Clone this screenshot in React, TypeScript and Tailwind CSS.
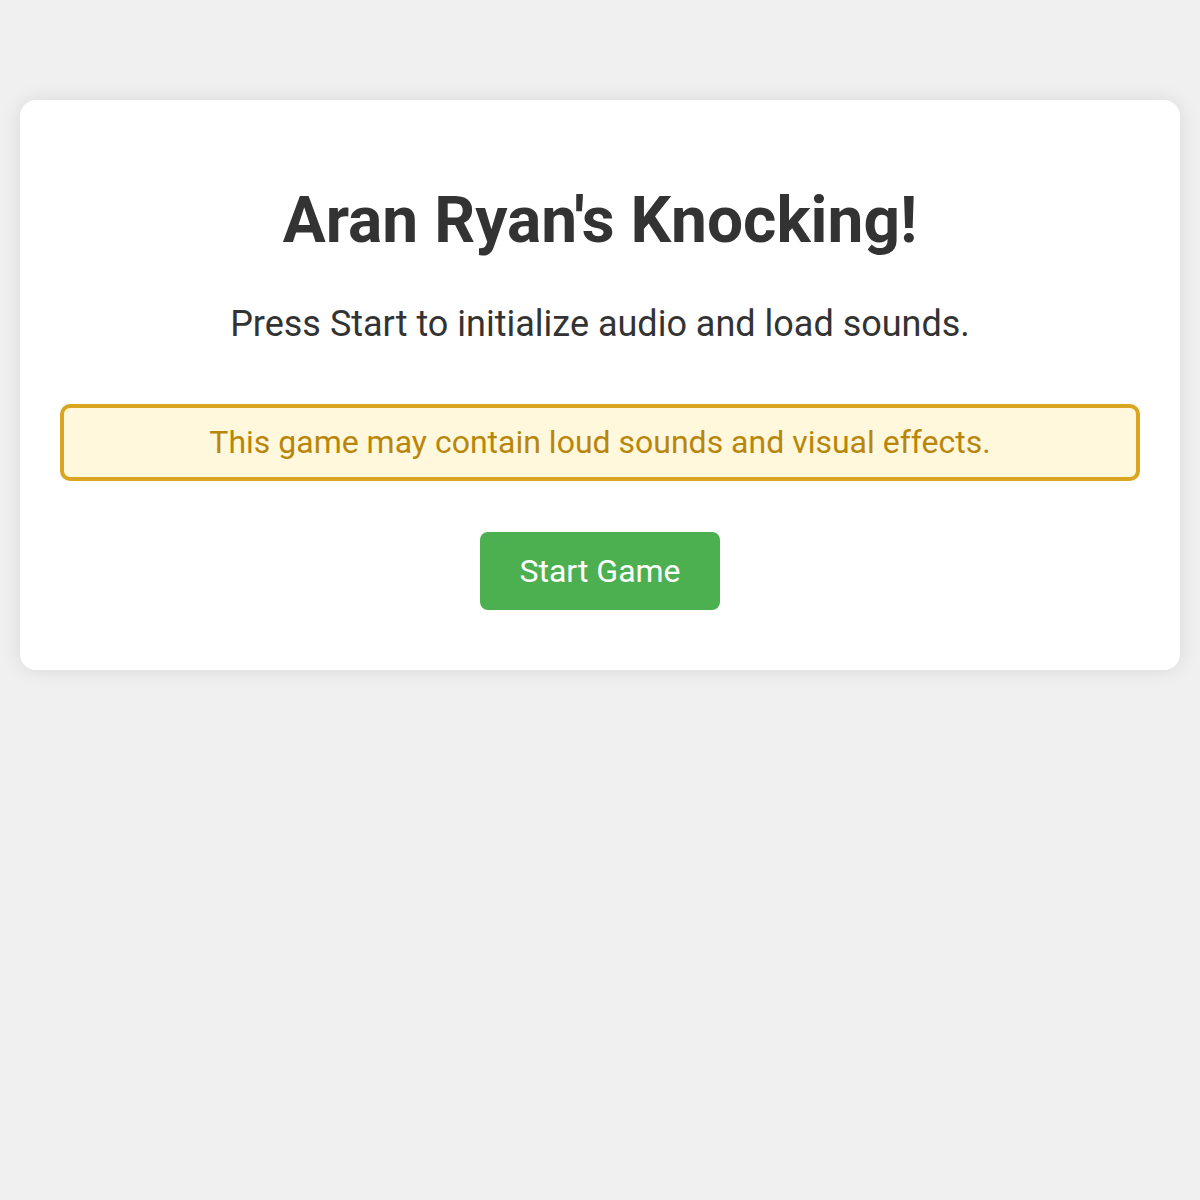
export default function App() {
  return (
    <div
      className="min-h-[1200px] bg-[#f0f0f0] px-5 pt-[100px] text-[#333]"
      style={{ fontFamily: 'Roboto, "Noto Sans", sans-serif' }}
    >
      <div className="rounded-2xl bg-white px-10 pt-10 pb-10 text-center shadow-[0_0_20px_rgba(0,0,0,0.1)]">
        <h1 className="my-[43px] text-[64px] font-bold leading-[1.172]">Aran Ryan's Knocking!</h1>
        <p className="mt-[45px] text-[36px] leading-[42px]">Press Start to initialize audio and load sounds.</p>
        <div className="mt-[59px] rounded-[10px] border-4 border-[#daa520] bg-[#fff8dc] px-5 py-4 text-[32px] leading-[37px] text-[#b8860b]">
          This game may contain loud sounds and visual effects.
        </div>
        <button className="mt-[51px] mb-5 rounded-lg bg-[#4caf50] px-[39px] py-5 text-[32px] leading-[38px] text-white">
          Start Game
        </button>
      </div>
    </div>
  );
}
